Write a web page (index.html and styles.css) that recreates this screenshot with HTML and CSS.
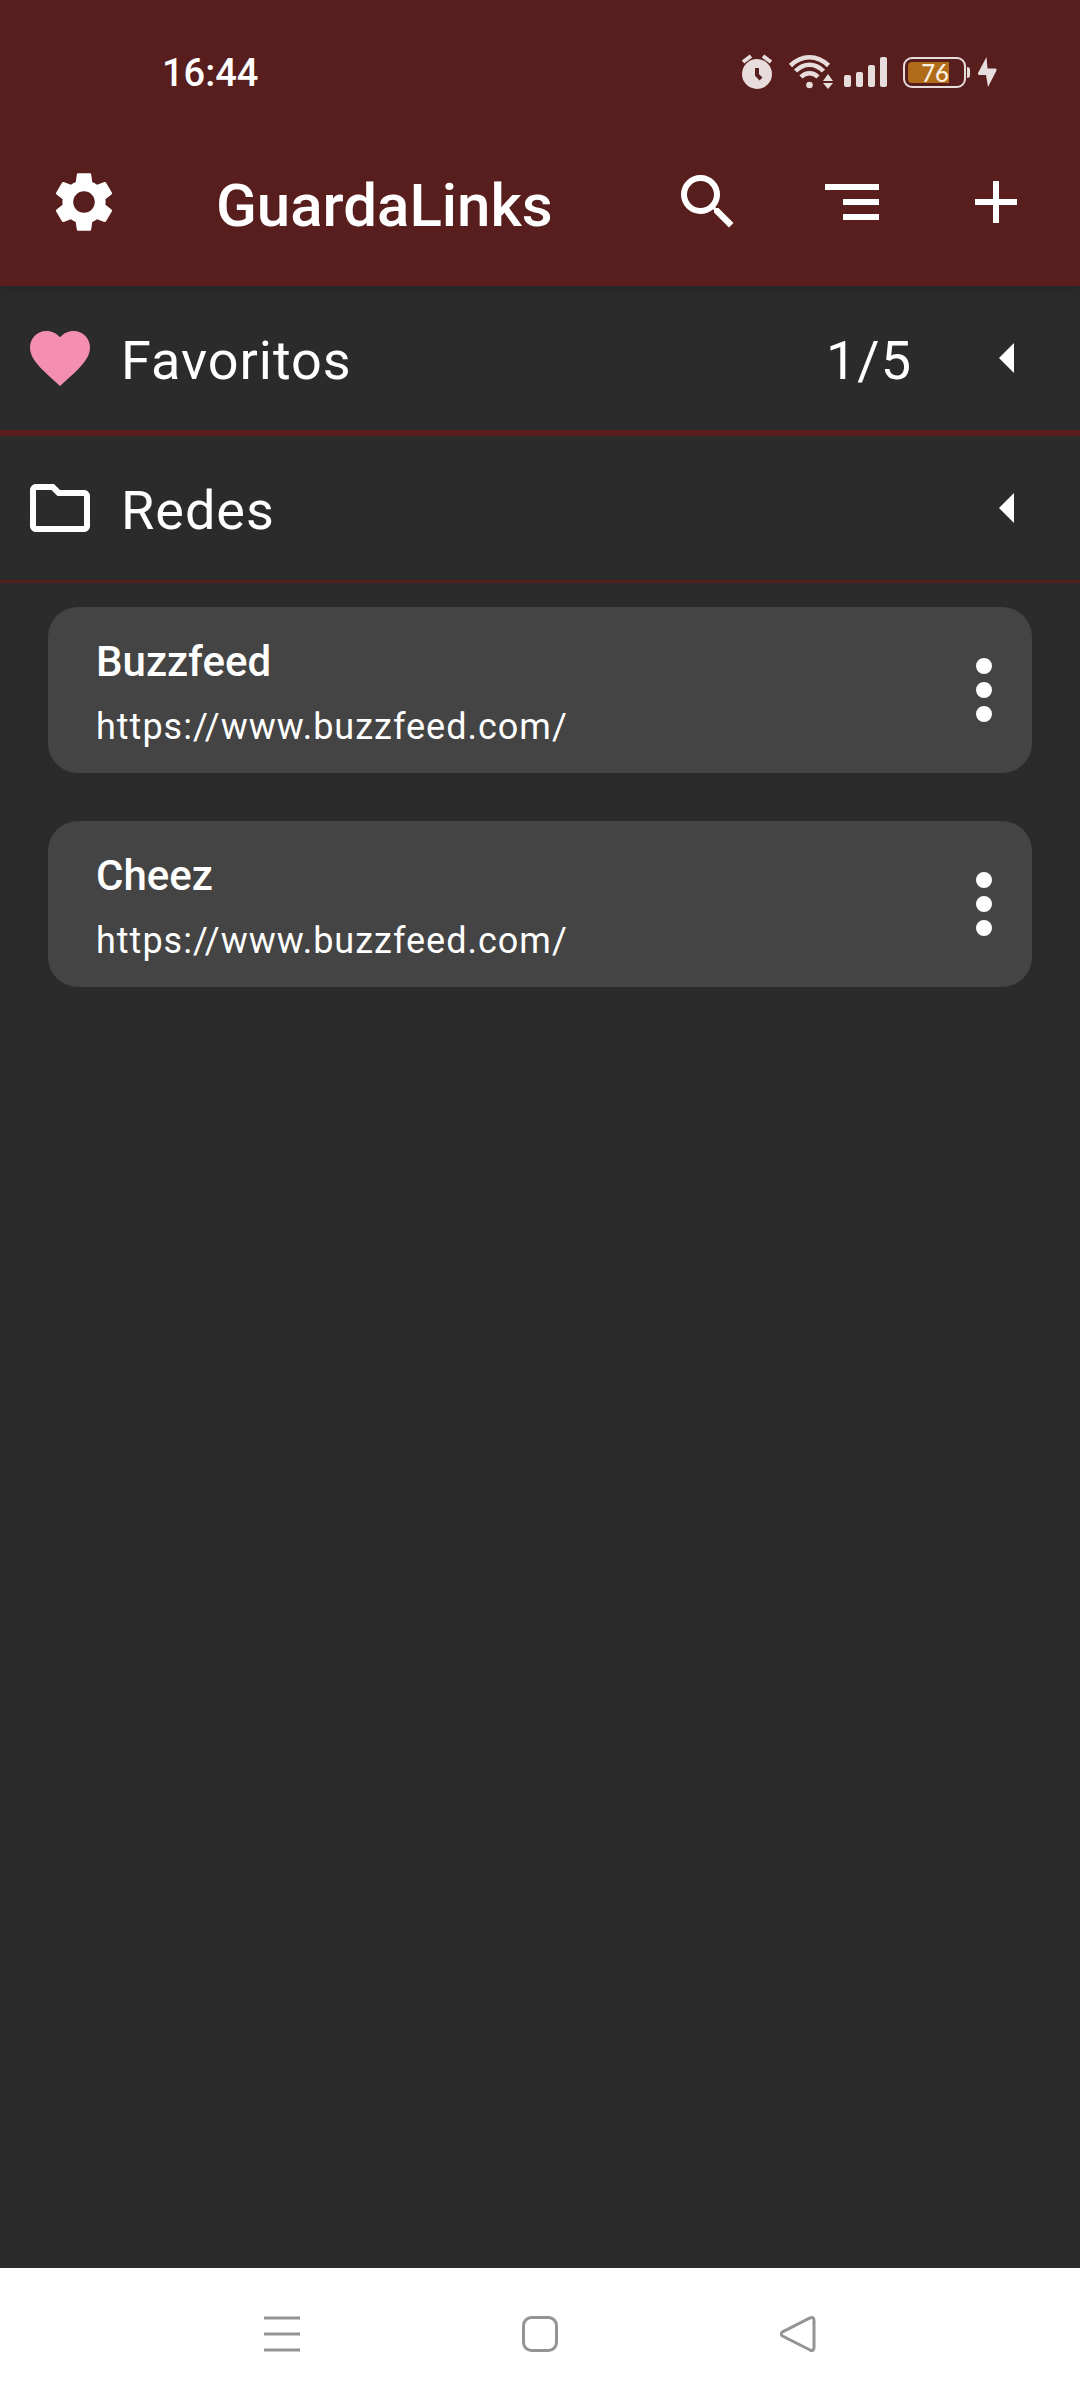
FILE: index.html
```html
<!DOCTYPE html>
<html lang="pt">
<head>
<meta charset="utf-8">
<meta name="viewport" content="width=device-width, initial-scale=1">
<title>GuardaLinks</title>
<link rel="stylesheet" href="styles.css">
</head>
<body>
<div class="screen">
  <header class="top">
    <div class="status">
      <time class="clock" datetime="16:44">16:44</time>
      <div class="indicators">
        <svg class="alarm" viewBox="0 0 32 36" aria-hidden="true">
          <circle cx="16" cy="20" r="15" fill="currentColor"/>
          <path d="M2 8l8-6M30 8l-8-6" stroke="currentColor" stroke-width="4"/>
          <path d="M16 14v7l4 4" fill="none" stroke="#581e1e" stroke-width="4"/>
        </svg>
        <svg class="wifi" viewBox="0 0 44 36" aria-hidden="true">
          <g fill="none" stroke="currentColor" stroke-width="4.500">
            <path d="M1.500 11.500C13 .5 28 .5 39.500 11.500"/>
            <path d="M6.500 17C15 8.500 26 8.500 34.500 17"/>
            <path d="M12 23c5-5 12-5 17 0"/>
          </g>
          <circle cx="20.500" cy="31" r="3.300" fill="currentColor"/>
          <path d="M39 20l5 7H34zM34 29h10l-5 6z" fill="currentColor"/>
        </svg>
        <svg class="signal" viewBox="0 0 44 30" aria-hidden="true">
          <g fill="currentColor">
            <rect x="0" y="18" width="7" height="12" rx="2"/>
            <rect x="12" y="15" width="7" height="15" rx="2"/>
            <rect x="24" y="8" width="7" height="22" rx="2"/>
            <rect x="36" y="0" width="7" height="30" rx="2"/>
          </g>
        </svg>
        <div class="battery"><div class="battery-body"><span class="battery-level">76</span></div><i class="battery-tip"></i></div>
        <svg class="bolt" viewBox="0 0 20 30" aria-hidden="true">
          <path d="M9.500 0L1 16q-.5 2 1 2h7l2 12 8.500-16.500q.5-2-1-2h-8z" fill="currentColor"/>
        </svg>
      </div>
    </div>
    <div class="toolbar">
      <button class="icon-button" type="button" aria-label="Configurações">
        <svg class="icon" viewBox="0 0 24 24"><path d="M19.140 12.940c.04-.3.060-.61.060-.94 0-.32-.02-.64-.07-.94l2.030-1.580c.18-.14.230-.41.120-.61l-1.920-3.320c-.12-.22-.37-.29-.59-.22l-2.390.96c-.5-.38-1.030-.7-1.620-.94L14.400 2.810c-.04-.24-.24-.41-.48-.41h-3.840c-.24 0-.43.17-.47.41L9.250 5.350c-.59.24-1.130.57-1.620.94l-2.390-.96c-.22-.08-.47 0-.59.22L2.740 8.870c-.12.21-.08.47.12.61l2.030 1.580c-.05.3-.09.63-.09.94s.02.64.07.94l-2.030 1.580c-.18.14-.23.41-.12.61l1.920 3.320c.12.22.37.29.59.22l2.390-.96c.5.38 1.030.7 1.620.94l.36 2.540c.05.24.24.41.48.41h3.840c.24 0 .44-.17.47-.41l.36-2.540c.59-.24 1.130-.56 1.620-.94l2.390.96c.22.08.47 0 .59-.22l1.920-3.320c.12-.22.07-.47-.12-.61l-2.010-1.580zM12 15.600c-1.980 0-3.600-1.620-3.600-3.600s1.620-3.600 3.600-3.600 3.600 1.620 3.600 3.600-1.620 3.600-3.600 3.600z"/></svg>
      </button>
      <h1 class="title">GuardaLinks</h1>
      <button class="icon-button" type="button" aria-label="Buscar">
        <svg class="icon" viewBox="0 0 24 24"><path d="M15.500 14h-.79l-.28-.27A6.471 6.471 0 0 0 16 9.500 6.500 6.500 0 1 0 9.500 16c1.610 0 3.090-.59 4.230-1.570l.27.280v.79l5 4.990L20.490 19l-4.990-5zm-6 0C7.010 14 5 11.990 5 9.500S7.010 5 9.500 5 14 7.010 14 9.500 11.990 14 9.500 14z"/></svg>
      </button>
      <button class="icon-button" type="button" aria-label="Ordenar">
        <svg class="icon" viewBox="0 0 24 24"><path d="M3 6h18v2H3zM9 11h12v2H9zM9 16h12v2H9z"/></svg>
      </button>
      <button class="icon-button" type="button" aria-label="Adicionar">
        <svg class="icon" viewBox="0 0 24 24"><path d="M19 13h-6v6h-2v-6H5v-2h6V5h2v6h6z"/></svg>
      </button>
    </div>
  </header>

  <main class="content">
    <button class="group group-favorites" type="button">
      <svg class="icon heart" viewBox="0 0 24 24" aria-hidden="true"><path d="M12 21.350l-1.450-1.320C5.400 15.360 2 12.280 2 8.500 2 5.420 4.420 3 7.500 3c1.740 0 3.410.81 4.500 2.090C13.090 3.810 14.760 3 16.500 3 19.580 3 22 5.420 22 8.500c0 3.780-3.400 6.860-8.550 11.540z"/></svg>
      <span class="group-name">Favoritos</span>
      <span class="group-count">1/5</span>
      <svg class="icon" viewBox="0 0 24 24" aria-hidden="true"><path d="M14 7l-5 5 5 5z"/></svg>
    </button>
    <button class="group" type="button">
      <svg class="icon" viewBox="0 0 24 24" aria-hidden="true"><path d="M9.170 6l2 2H20v10H4V6h5.170M10 4H4c-1.100 0-1.990.9-1.990 2L2 18c0 1.100.9 2 2 2h16c1.100 0 2-.9 2-2V8c0-1.100-.9-2-2-2h-8l-2-2z"/></svg>
      <span class="group-name">Redes</span>
      <svg class="icon" viewBox="0 0 24 24" aria-hidden="true"><path d="M14 7l-5 5 5 5z"/></svg>
    </button>

    <ul class="links">
      <li class="card">
        <div class="card-text">
          <h2 class="card-title">Buzzfeed</h2>
          <a class="card-url" href="https://www.buzzfeed.com/">https://www.buzzfeed.com/</a>
        </div>
        <button class="more" type="button" aria-label="Mais opções de Buzzfeed">
          <svg class="more-icon" viewBox="0 0 24 24"><path d="M12 8a2 2 0 1 0 0-4 2 2 0 0 0 0 4zm0 2a2 2 0 1 0 0 4 2 2 0 0 0 0-4zm0 6a2 2 0 1 0 0 4 2 2 0 0 0 0-4z"/></svg>
        </button>
      </li>
      <li class="card">
        <div class="card-text">
          <h2 class="card-title">Cheez</h2>
          <a class="card-url" href="https://www.buzzfeed.com/">https://www.buzzfeed.com/</a>
        </div>
        <button class="more" type="button" aria-label="Mais opções de Cheez">
          <svg class="more-icon" viewBox="0 0 24 24"><path d="M12 8a2 2 0 1 0 0-4 2 2 0 0 0 0 4zm0 2a2 2 0 1 0 0 4 2 2 0 0 0 0-4zm0 6a2 2 0 1 0 0 4 2 2 0 0 0 0-4z"/></svg>
        </button>
      </li>
    </ul>
  </main>

  <nav class="system-nav" aria-label="Sistema">
    <button class="nav-button" type="button" aria-label="Recentes">
      <svg class="nav-icon" viewBox="0 0 36 36"><path d="M0 2h36M0 18h36M0 34h36"/></svg>
    </button>
    <button class="nav-button" type="button" aria-label="Início">
      <svg class="nav-icon" viewBox="0 0 36 36"><rect x="1.500" y="1.500" width="33" height="33" rx="8"/></svg>
    </button>
    <button class="nav-button" type="button" aria-label="Voltar">
      <svg class="nav-icon" viewBox="0 0 36 36"><path d="M2.500 15.800L30 2Q34 .5 34 4.500v27Q34 35.500 30 34L2.500 20Q0 18 2.500 15.800z"/></svg>
    </button>
  </nav>
</div>
</body>
</html>
```

FILE: styles.css
```css
* {
  box-sizing: border-box;
}

body {
  margin: 0;
  background: #2b2b2b;
  color: #fff;
  font-family: Roboto, "Liberation Sans", sans-serif;
}

button {
  margin: 0;
  padding: 0;
  border: 0;
  background: none;
  color: inherit;
  font: inherit;
  text-align: left;
}

svg {
  display: block;
  flex: none;
}

.screen {
  display: flex;
  flex-direction: column;
  min-height: 100vh;
}

/* Status bar and toolbar */
.top {
  background: #581e1e;
  box-shadow: 0 2px 10px rgba(0, 0, 0, 0.15);
}

.status {
  display: flex;
  align-items: center;
  justify-content: space-between;
  height: 118px;
  padding: 26px 83px 0 162px;
}

.clock {
  padding-top: 2px;
  font-size: 38px;
  font-weight: 500;
  line-height: 44px;
}

.indicators {
  display: flex;
  align-items: center;
  color: #e8dddd;
}

.alarm {
  width: 32px;
  height: 36px;
  margin-right: 16px;
}

.wifi {
  width: 44px;
  height: 36px;
  margin-right: 11px;
}

.signal {
  width: 44px;
  height: 30px;
  margin-right: 15px;
}

.battery {
  display: flex;
  align-items: center;
  gap: 1px;
  margin-right: 7px;
}

.battery-body {
  width: 63px;
  height: 31px;
  padding: 3px;
  border: 2px solid currentColor;
  border-radius: 9px;
}

.battery-level {
  display: block;
  width: 41px;
  border-radius: 4px 0 0 4px;
  background: #b06c18;
  color: #fbefe0;
  font-family: Lato, sans-serif;
  font-size: 24px;
  font-weight: 500;
  line-height: 21px;
  text-align: right;
}

.battery-tip {
  width: 3px;
  height: 11px;
  border-radius: 0 3px 3px 0;
  background: currentColor;
}

.bolt {
  width: 20px;
  height: 30px;
}

.toolbar {
  display: flex;
  align-items: center;
  height: 168px;
  padding: 0 12px;
}

.icon-button {
  display: flex;
  flex: none;
  align-items: center;
  justify-content: center;
  width: 144px;
  height: 144px;
}

.icon {
  width: 72px;
  height: 72px;
  fill: currentColor;
}

.title {
  flex: 1;
  margin: 0;
  padding: 8px 0 0 60px;
  font-size: 60px;
  font-weight: 500;
  line-height: 72px;
}

/* Link groups */
.content {
  flex: 1;
}

.group {
  display: flex;
  align-items: center;
  width: 100%;
  padding: 36px 36px 36px 24px;
  border-bottom: 3px solid #521f1f;
  font-size: 54px;
  line-height: 66px;
  letter-spacing: 1px;
}

.group-favorites {
  border-bottom: 6px solid #581e1e;
}

.heart {
  color: #f48fb1;
}

.group-name {
  flex: 1;
  padding: 6px 0 0 25px;
}

.group-count {
  padding: 6px 60px 0 0;
}

/* Link cards */
.links {
  display: flex;
  flex-direction: column;
  gap: 48px;
  margin: 0;
  padding: 24px 48px;
  list-style: none;
}

.card {
  display: flex;
  align-items: center;
  padding: 24px 0 12px 48px;
  border-radius: 30px;
  background: #444;
}

.card-text {
  flex: 1;
}

.card-title {
  margin: 0;
  font-size: 42px;
  font-weight: 500;
  line-height: 62px;
}

.card-url {
  display: block;
  color: inherit;
  font-size: 36px;
  line-height: 68px;
  letter-spacing: 1px;
  text-decoration: none;
}

.more {
  padding-bottom: 12px;
}

.more-icon {
  width: 96px;
  height: 96px;
  fill: currentColor;
}

/* System navigation */
.system-nav {
  display: flex;
  justify-content: center;
  height: 132px;
  background: #fff;
  color: #949494;
}

.nav-button {
  display: flex;
  align-items: center;
  justify-content: center;
  width: 258px;
}

.nav-icon {
  width: 36px;
  height: 36px;
  fill: none;
  stroke: currentColor;
  stroke-width: 3;
}
```
